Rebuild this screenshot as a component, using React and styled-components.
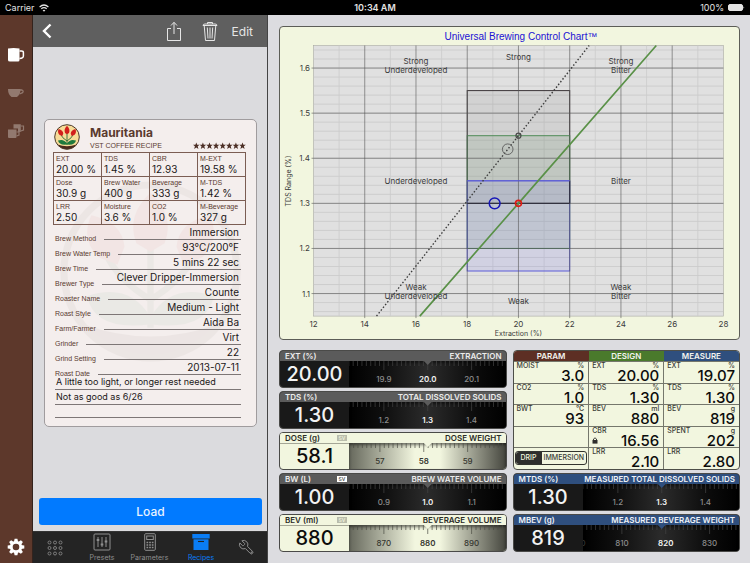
import {useState} from "react";
import styled, {createGlobalStyle} from "styled-components";

const GlobalStyle = createGlobalStyle`
* { box-sizing: border-box; }
body { margin: 0; background: #000; font-family: Inter, "Liberation Sans", sans-serif; }
button { font: inherit; color: inherit; background: none; border: 0; padding: 0; cursor: pointer; }
h1, h2, p, dl, dd, dt { margin: 0; font-size: inherit; font-weight: inherit; }
svg { display: block; }
`;

const Screen = styled.div`
min-height: 100vh;
display: flex;
flex-direction: column;
`;

const StatusBar = styled.header`
display: grid;
grid-template-columns: 1fr auto 1fr;
align-items: center;
height: 15px;
padding: 0 5px;
background: #000;
color: #e4e4e4;
font-size: 9px;
`;

const Side = styled.div`
display: flex;
align-items: center;
gap: 4px;
justify-content: ${(p) => (p.$end ? "flex-end" : "flex-start")};
`;

const Clock = styled.div`
font-size: 9px;
font-weight: 600;
`;

const Layout = styled.div`
flex: 1;
display: grid;
grid-template-columns: 33px 235px minmax(0, 1fr);
`;

const SideBar = styled.nav`
display: flex;
flex-direction: column;
align-items: center;
gap: 22px;
padding: 32px 0 7px;
background: #5d382b;
border-right: 1px solid #33231d;
`;

const SideButton = styled.button`
width: 18px;
height: 16px;
color: ${(p) => (p.$active ? "#fff" : "#92796f")};
${(p) => p.$last && "margin-top: auto; height: 18px;"}
`;

const Panel = styled.section`
display: flex;
flex-direction: column;
background: #dbdbde;
border-right: 1px solid #444;
`;

const ToolBar = styled.div`
display: flex;
align-items: center;
gap: 14px;
height: 32px;
padding: 0 14px 0 9px;
background: #5f5f5f;
color: #e6e6e6;
font-size: 12px;
`;

const ToolGroup = styled.div`
display: flex;
align-items: center;
gap: 20px;
margin-left: auto;
`;

const PanelBody = styled.div`
flex: 1;
display: flex;
flex-direction: column;
padding: 0 5px 6px 6px;
`;

const Center = styled.div`
flex: 1;
display: flex;
align-items: center;
padding: 0 5px;
`;

const LoadButton = styled.button`
height: 27px;
border-radius: 3px;
background: #017aff;
color: #e8f2ff;
font-size: 12px;
font-weight: 500;
`;

const Recipe = styled.article`
position: relative;
width: 100%;
height: 308px;
padding: 4px 10px 0 8px;
border: 1px solid #a09c9e;
border-radius: 5px;
background: #f4eeed;
color: #1b1718;
`;

const Watermark = styled.div`
position: absolute;
inset: 60px 14px auto 14px;
opacity: 0.04;
`;

const RecipeTop = styled.div`
position: relative;
display: grid;
grid-template-columns: 36px 1fr auto;
align-items: end;
height: 28px;
padding: 0 0 2px 1px;
color: #5a3a2f;
`;

const RecipeName = styled.h1`
font-size: 12px;
line-height: 16px;
font-weight: 700;
`;

const RecipeKind = styled.p`
font: 7px/9px "Liberation Sans", sans-serif;
white-space: nowrap;
`;

const Facts = styled.dl`
position: relative;
display: grid;
grid-template-columns: repeat(4, 1fr);
border: solid #7b5d53;
border-width: 1px 0 0 1px;
div {
height: 24px;
padding: 1px 0 0 2px;
border: solid #7b5d53;
border-width: 0 1px 1px 0;
white-space: nowrap;
}
dt { font: 7px/9px "Liberation Sans", sans-serif; color: #5a3a2f; }
dd { font-size: 10px; line-height: 13px; }
`;

const Fields = styled.div`
position: relative;
display: grid;
grid-template-columns: minmax(0, 1fr);
grid-auto-rows: 1fr;
height: 193px;
padding: 0 5px 0 2px;
`;

const Field = styled.div`
display: flex;
align-items: flex-end;
gap: 8px;
`;

const FieldName = styled.span`
margin-bottom: -2px;
font: 7px/6px "Liberation Sans", sans-serif;
color: #5a3a2f;
`;

const FieldValue = styled.span`
flex: 1;
height: 100%;
padding: 0 2px 0 1px;
border-bottom: 1px solid #7d7676;
font-size: ${(p) => (p.$note ? 9 : 10)}px;
line-height: 14px;
text-align: ${(p) => (p.$note ? "left" : "right")};
white-space: nowrap;
`;

const TabBar = styled.nav`
display: grid;
grid-template-columns: 44fr 50fr 45fr 58fr 33fr;
height: 32px;
padding-right: 4px;
background: #242424;
border-top: 1px solid #333;
`;

const Tab = styled.button`
display: flex;
flex-direction: column;
align-items: center;
justify-content: center;
gap: 2px;
color: ${(p) => (p.$active ? "#0a7df5" : "#8f8f8f")};
font-size: 7px;
line-height: 9px;
`;

const Main = styled.main`
display: flex;
flex-direction: column;
gap: 10px;
padding: 11px 10px 11px 11px;
background: #dcdce0;
`;

const ChartBox = styled.figure`
margin: 0;
border: 1px solid #5c5d57;
border-radius: 4px;
background: #f2f6df;
overflow: hidden;
`;

const Columns = styled.div`
display: grid;
grid-template-columns: repeat(2, minmax(0, 1fr));
gap: 6px;
`;

const Column = styled.div`
display: flex;
flex-direction: column;
gap: 3px;
`;

const dark = {
    head: "#5b5b5b", headText: "#ececec", rule: "transparent", body: "#191919", text: "#f2f2f2",
    num: "#8c8c8c", strong: "#f4f4f4", tick: "#454545",
    dial: "#000, #0f0f0f 22%, #2b2b2b 50%, #0a0a0a 82%, #000",
};

const themes = {
    dark,
    blue: {...dark, head: "#2f4f7e", headText: "#eef2f8"},
    light: {
        head: "#f2f6df", headText: "#2a2b27", rule: "#a4a696", body: "#f2f6df", text: "#0c0c0c",
        num: "#35362f", strong: "#35362f", tick: "#4b4c43",
        dial: "#66685c, #a9ac9b 20%, #f2f6df 42%, #f2f6df 58%, #8f9183 82%, #45463e",
    },
};

const GaugeBox = styled.section`
height: 38px;
border: 1px solid #4a4a48;
border-radius: 4px;
overflow: hidden;
background: ${(p) => p.$look.body};
`;

const GaugeHead = styled.div`
display: flex;
align-items: center;
height: 10px;
padding: 0 4px 0 5px;
background: ${(p) => p.$look.head};
box-shadow: 0 1px 0 ${(p) => p.$look.rule};
color: ${(p) => p.$look.headText};
font-size: 8px;
line-height: 10px;
font-weight: 600;
white-space: nowrap;
`;

const GaugeUnit = styled.span`
display: flex;
align-items: center;
justify-content: space-between;
width: 62px;
`;

const GaugeName = styled.h2`
margin-left: auto;
`;

const Badge = styled.small`
width: 10px;
height: 6px;
font-size: 5px;
line-height: 6px;
text-align: center;
background: ${(p) => (p.$on ? "#fff" : "#b9bcab")};
color: ${(p) => (p.$on ? "#555" : "#eef1dc")};
`;

const GaugeRow = styled.div`
display: grid;
grid-template-columns: 69px minmax(0, 1fr);
height: 26px;
`;

const Value = styled.output`
font-size: 20px;
line-height: 26px;
font-weight: 500;
text-align: center;
color: ${(p) => p.$look.text};
`;

const Dial = styled.div`
background: linear-gradient(to right, ${(p) => p.$look.dial});
box-shadow: inset 0 2px 3px rgba(0, 0, 0, 0.5);
overflow: hidden;
`;

const DataBox = styled.div`
height: 120px;
border: 1px solid #4d4e48;
border-radius: 4px;
background: #f2f6df;
overflow: hidden;
`;

const DataTable = styled.table`
width: 100%;
height: 100%;
table-layout: fixed;
border-collapse: collapse;
`;

const HeadCell = styled.th`
height: 10px;
padding: 0;
background: ${(p) => p.$color};
color: #f3f3ee;
font-size: 8px;
line-height: 10px;
font-weight: 600;
`;

const DataCell = styled.td`
padding: 0 4px 0 3px;
border: solid #75776c;
border-width: 1px 0 0 1px;
vertical-align: top;
&:first-child { border-left: 0; }
`;

const Caption = styled.div`
display: flex;
justify-content: space-between;
font-size: 7px;
line-height: 7px;
font-weight: 500;
color: #3a3b36;
`;

const Figure = styled.div`
display: flex;
align-items: center;
justify-content: space-between;
font-size: 15px;
line-height: 13px;
font-weight: 500;
color: #0c0c0c;
span { margin-left: auto; }
`;

const Segments = styled.fieldset`
display: grid;
grid-template-columns: 26px minmax(0, 1fr);
height: 14px;
min-width: 0;
margin: 3px -3px 0 -2px;
padding: 0;
border: 1px solid #33342f;
border-radius: 3px;
overflow: hidden;
`;

const Segment = styled.label`
font-size: 7px;
line-height: 12px;
font-weight: 500;
text-align: center;
background: ${(p) => (p.$on ? "#2e2e2c" : "transparent")};
color: ${(p) => (p.$on ? "#f2f6df" : "#3a3b36")};
input { appearance: none; position: absolute; margin: 0; }
`;

const facts = [
    ["EXT", "20.00 %"], ["TDS", "1.45 %"], ["CBR", "12.93"], ["M-EXT", "19.58 %"],
    ["Dose", "30.9 g"], ["Brew Water", "400 g"], ["Beverage", "333 g"], ["M-TDS", "1.42 %"],
    ["LRR", "2.50"], ["Moisture", "3.6 %"], ["CO2", "1.0 %"], ["M-Beverage", "327 g"],
];

const fields = [
    ["Brew Method", "Immersion"],
    ["Brew Water Temp", "93°C/200°F"],
    ["Brew Time", "5 mins 22 sec"],
    ["Brewer Type", "Clever Dripper-Immersion"],
    ["Roaster Name", "Counte"],
    ["Roast Style", "Medium - Light"],
    ["Farm/Farmer", "Aida Ba"],
    ["Grinder", "Virt"],
    ["Grind Setting", "22"],
    ["Roast Date", "2013-07-11"],
];

const notes = ["A little too light, or longer rest needed", "Not as good as 6/26", ""];

const gauges = [
    {unit: "EXT (%)", name: "EXTRACTION", value: "20.00", marks: ["19.9", "20.0", "20.1"], look: "dark"},
    {unit: "TDS (%)", name: "TOTAL DISSOLVED SOLIDS", value: "1.30", marks: ["1.2", "1.3", "1.4"], look: "dark"},
    {unit: "DOSE (g)", name: "DOSE WEIGHT", value: "58.1", marks: ["57", "58", "59"], look: "light", badge: true, shift: -4},
    {unit: "BW (L)", name: "BREW WATER VOLUME", value: "1.00", marks: ["0.9", "1.0", "1.1"], look: "dark", badge: true, on: true},
    {unit: "BEV (ml)", name: "BEVERAGE VOLUME", value: "880", marks: ["870", "880", "890"], look: "light", badge: true},
];

const measured = [
    {unit: "MTDS (%)", name: "MEASURED TOTAL DISSOLVED SOLIDS", value: "1.30", marks: ["1.2", "1.3", "1.4"], look: "blue"},
    {unit: "MBEV (g)", name: "MEASURED BEVERAGE WEIGHT", value: "819", marks: ["810", "820", "830"], look: "blue", shift: 4, before: "800"},
];

const rows = [
    [["MOIST", "%", "3.0"], ["EXT", "%", "20.00"], ["EXT", "%", "19.07"]],
    [["CO2", "%", "1.0"], ["TDS", "%", "1.30"], ["TDS", "%", "1.30"]],
    [["BWT", "°C", "93"], ["BEV", "ml", "880"], ["BEV", "g", "819"]],
    [null, ["CBR", "", "16.56", true], ["SPENT", "g", "202"]],
    ["switch", ["LRR", "", "2.10"], ["LRR", "", "2.80"]],
];

const Wifi = () => (
    <svg width="10" height="8" viewBox="0 0 10 8" fill="none" stroke="#e4e4e4" strokeWidth="1.2">
        <path d="M0.6 3 Q5 -1 9.4 3" />
        <path d="M2.3 4.8 Q5 2.4 7.7 4.8" />
        <path d="M5 7.7 L3.6 6.3 Q5 5.2 6.4 6.3 Z" fill="#e4e4e4" stroke="none" />
    </svg>
);

const Battery = () => (
    <svg width="17" height="7" viewBox="0 0 17 7">
        <rect x="0.5" y="0.5" width="14" height="6" rx="1.5" fill="#e4e4e4" stroke="#e4e4e4" />
        <path d="M15.5 2.2 Q17 3.5 15.5 4.8 Z" fill="#e4e4e4" />
    </svg>
);

const Mug = () => (
    <svg width="18" height="16" viewBox="0 0 18 16">
        <path d="M1 1.5 Q6.5 0.5 12.5 1.5 V13 Q12.5 14.5 11 14.5 H3 Q1 14.5 1 13 Z" fill="currentColor" />
        <path d="M12.5 4 H14.5 Q16.4 4 16.4 5.5 V9 Q16.4 11.2 12.5 11.5" fill="none" stroke="currentColor" strokeWidth="1.5" />
    </svg>
);

const Cup = () => (
    <svg width="18" height="16" viewBox="0 0 18 16">
        <path d="M1 4 H13.5 Q13.5 9.5 10 12 H4.5 Q1 9.5 1 4 Z" fill="currentColor" />
        <path d="M13 5 H15 Q17 6 15.5 7.7 L12.5 9" fill="none" stroke="currentColor" strokeWidth="1.3" />
    </svg>
);

const Mugs = () => (
    <svg width="18" height="16" viewBox="0 0 18 16">
        <path d="M6.5 1.3 H13.8 V9 H11 V5.5 H6.5 Z M1 6.5 H9.5 V14 Q9.5 15 8.5 15 H2 Q1 15 1 14 Z" fill="currentColor" />
        <path d="M13.8 3 H16.5 V7 L13.8 8 M9.5 9 H12 V12 L9.5 13" fill="none" stroke="currentColor" strokeWidth="1.2" />
    </svg>
);

const Gear = () => (
    <svg width="18" height="18" viewBox="0 0 18 18">
        {[0, 45, 90, 135, 180, 225, 270, 315].map((a) => (
            <path key={a} d="M6.9 4 L7.6 0.7 H10.4 L11.1 4 Z" fill="currentColor" transform={`rotate(${a} 9 9)`} />
        ))}
        <circle cx="9" cy="9" r="4.7" fill="none" stroke="currentColor" strokeWidth="2.8" />
    </svg>
);

const Back = () => (
    <svg width="10" height="16" viewBox="0 0 10 16" fill="none" stroke="#fff" strokeWidth="2.4">
        <path d="M8.5 1.5 L2 8 L8.5 14.5" />
    </svg>
);

const Share = () => (
    <svg width="16" height="21" viewBox="0 0 16 21" fill="none" stroke="currentColor" strokeWidth="1">
        <path d="M5 7.5 H1.5 V19.5 H14.5 V7.5 H11 M8 13 V1.5 M5 4.5 L8 1.3 L11 4.5" />
    </svg>
);

const Trash = () => (
    <svg width="16" height="21" viewBox="0 0 16 21" fill="none" stroke="currentColor" strokeWidth="1">
        <path d="M1 4.5 Q1 3 3 3 H13 Q15 3 15 4.5 Z M5.5 3 V1.5 H10.5 V3 M2.2 4.5 L3.5 19.5 H12.5 L13.8 4.5 M5.3 6.5 L6 17.5 M8 6.5 V17.5 M10.7 6.5 L10 17.5" />
    </svg>
);

const Emblem = ({size, disc = "#f7dc98"}) => (
    <svg width={size} height={size} viewBox="0 0 26 26">
        <circle cx="13" cy="13" r="12.3" fill={disc} />
        <path d="M3.5 20.5 Q13 24 22.5 20.5 Q19 25.3 13 25.3 Q7 25.3 3.5 20.5 Z" fill="#4c2a1c" />
        <path d="M13 8 V21 M6.5 10 Q8 14 13 17 M19.5 10 Q18 14 13 17" fill="none" stroke="#2d6a35" strokeWidth="0.9" />
        <path d="M13 19.5 Q10 14.5 4 16.5 Q5 21.5 13 20.5 Z M13 19.5 Q16 14.5 22 16.5 Q21 21.5 13 20.5 Z" fill="#1f7a3d" />
        <path d="M13 1.8 Q16.5 5 15 9 L13 10.2 L11 9 Q9.5 5 13 1.8 Z" fill="#d21f1c" />
        <path d="M4.6 5 Q9 6 9.3 9.5 L8.3 12 L5.7 11 Q3 8.5 4.6 5 Z M21.4 5 Q17 6 16.7 9.5 L17.7 12 L20.3 11 Q23 8.5 21.4 5 Z" fill="#d21f1c" />
        <circle cx="13" cy="13" r="12.3" fill="none" stroke="#4c3a2c" strokeWidth="1" />
    </svg>
);

const Stars = () => (
    <svg width="53" height="8" viewBox="0 0 53 8" fill="#4c2f26" role="img" aria-label="8 stars">
        {[0, 1, 2, 3, 4, 5, 6, 7].map((i) => (
            <path key={i} transform={`translate(${i * 6.6} 0)`} d="M3.3 0.4 L4.2 2.7 H6.6 L4.7 4.3 L5.4 6.9 L3.3 5.5 L1.2 6.9 L1.9 4.3 L0 2.7 H2.4 Z" />
        ))}
    </svg>
);

const Keypad = () => (
    <svg width="16" height="16" viewBox="0 0 16 16" fill="none" stroke="currentColor" strokeWidth="0.8">
        {[2.5, 8, 13.5].map((y) => [2.5, 8, 13.5].map((x) => <circle key={`${x}-${y}`} cx={x} cy={y} r="1.5" />))}
    </svg>
);

const Sliders = () => (
    <svg width="18" height="18" viewBox="0 0 18 18" fill="none" stroke="currentColor">
        <rect x="1" y="1" width="16" height="16" rx="1" />
        <path d="M5 4 V14 M9 4 V14 M13 4 V14" />
        <path d="M5 6 V8 M9 10.5 V12.5 M13 7.5 V9.5" strokeWidth="2.6" />
    </svg>
);

const Meter = () => (
    <svg width="12" height="18" viewBox="0 0 12 18" fill="none" stroke="currentColor">
        <rect x="0.7" y="0.7" width="10.6" height="16.6" rx="1" />
        <rect x="2.7" y="3" width="6.6" height="3.5" />
        <path d="M2.5 9.5 H9.5 M2.5 12 H9.5 M2.5 14.5 H9.5" strokeWidth="1.3" strokeDasharray="1.7 0.95" />
    </svg>
);

const Box = () => (
    <svg width="18" height="18" viewBox="0 0 18 18" fill="currentColor">
        <path d="M0.3 1 H17.7 V5.5 H0.3 Z" />
        <path d="M1.5 6.3 H16.5 V17 H1.5 Z" />
        <path d="M6 8.5 H12" stroke="#242424" strokeWidth="1.1" />
    </svg>
);

const Wrench = () => (
    <svg width="17" height="17" viewBox="0 0 24 24" fill="none" stroke="currentColor" strokeWidth="1.4">
        <path transform="translate(24 0) scale(-1 1)" d="M14.7 6.3a1 1 0 0 0 0 1.4l1.6 1.6a1 1 0 0 0 1.4 0l3.77-3.77a6 6 0 0 1-7.94 7.94l-6.91 6.91a2.12 2.12 0 0 1-3-3l6.91-6.91a6 6 0 0 1 7.94-7.94l-3.76 3.76z" />
        <circle cx="19" cy="19" r="0.7" />
    </svg>
);

const Lock = () => (
    <svg width="6" height="7" viewBox="0 0 6 7">
        <rect x="0.5" y="3" width="5" height="3.6" fill="#2e2e2c" />
        <path d="M1.5 3 V2 Q3 -0.3 4.5 2 V3" fill="none" stroke="#2e2e2c" strokeWidth="0.9" />
    </svg>
);

// chart scale: extraction 12-28 %, TDS 1.05-1.65 %
const px = (v) => 33.5 + (v - 12) * 25.62;
const py = (v) => 18.5 + (1.65 - v) * 451;

const zones = [
    {from: 1.55, to: 1.3, fill: "rgba(80,80,80,0.09)", line: "#3c3639"},
    {from: 1.45, to: 1.2, fill: "rgba(70,120,70,0.12)", line: "#4f8a57"},
    {from: 1.35, to: 1.15, fill: "rgba(110,110,240,0.13)", line: "#5a5ad8"},
];

const areas = [
    [16, 37, "Strong"], [16, 46, "Underdeveloped"], [20, 33, "Strong"], [24, 37, "Strong"], [24, 46, "Bitter"],
    [16, 157, "Underdeveloped"], [24, 157, "Bitter"],
    [16, 263, "Weak"], [16, 272, "Underdeveloped"], [20, 277, "Weak"], [24, 263, "Weak"], [24, 272, "Bitter"],
];

const Chart = () => {
    const minor = [];
    for (let i = 0; i < 30; i++) minor.push(1.06 + i * 0.02);
    return (
        <svg width="100%" viewBox="0 0 459 312" fontFamily="Inter, sans-serif" fontSize="8" fill="#3b3b3b">
            <rect x={px(12)} y={py(1.65)} width={px(28) - px(12)} height={py(1.05) - py(1.65)} fill="#e0e0e0" stroke="#a9a9a4" strokeWidth="0.6" />
            {minor.map((v) => <path key={v} d={`M${px(12)} ${py(v)} H${px(28)}`} stroke="#c6c6c6" strokeWidth="0.7" />)}
            {[13, 15, 17, 19, 21, 23, 25, 27].map((v) => <path key={v} d={`M${px(v)} ${py(1.65)} V${py(1.05)}`} stroke="#cbcbcb" strokeWidth="0.8" />)}
            {zones.map((z) => (
                <rect key={z.from} x={px(18)} y={py(z.from)} width={px(22) - px(18)} height={py(z.to) - py(z.from)} fill={z.fill} stroke={z.line} />
            ))}
            {[14, 16, 18, 20, 22, 24, 26].map((v) => <path key={v} d={`M${px(v)} ${py(1.65)} V${py(1.05) + 2}`} stroke="#555" strokeOpacity="0.75" strokeWidth="0.8" />)}
            {[1.1, 1.2, 1.3, 1.4, 1.5, 1.6].map((v) => <path key={v} d={`M${px(12) - 2} ${py(v)} H${px(28)}`} stroke="#555" strokeOpacity="0.75" strokeWidth="0.8" />)}
            <path d={`M${px(18)} ${py(1.3)} H${px(22)} V${py(1.35)}`} stroke="#2c2c3a" fill="none" />
            <path d={`M${px(18)} ${py(1.35)} H${px(22)}`} stroke="#5a5ad8" />
            <path d={`M${px(14.46)} ${py(1.05)} L${px(20)} ${py(1.45)} L${px(22.76)} ${py(1.65)}`} fill="none" stroke="#3d3d3d" strokeWidth="1.4" strokeDasharray="1.5 2" />
            <path d={`M${px(16.15)} ${py(1.05)} L${px(20)} ${py(1.3)} L${px(25.38)} ${py(1.65)}`} fill="none" stroke="#5a9148" strokeWidth="1.7" />
            <g fill="none">
                <circle cx={px(19.58)} cy={py(1.42)} r="5.3" stroke="#5c5c5c" strokeWidth="0.9" />
                <circle cx={px(20)} cy={py(1.45)} r="2.5" stroke="#4a4a4a" strokeWidth="1.2" />
                <circle cx={px(19.07)} cy={py(1.3)} r="5.4" stroke="#1616b8" strokeWidth="1.5" />
                <circle cx={px(20)} cy={py(1.3)} r="3" stroke="#e01c14" strokeWidth="1.6" />
            </g>
            <g textAnchor="middle">
                <text x="241" y="13" fontSize="10" fontFamily="Liberation Sans, sans-serif" fill="#1b12d4">Universal Brewing Control Chart™</text>
                {areas.map(([v, y, t]) => <text key={`${v}-${y}`} x={px(v)} y={y}>{t}</text>)}
                {[12, 14, 16, 18, 20, 22, 24, 26, 28].map((v) => <text key={v} x={px(v)} y="300">{v}</text>)}
                <text x={px(20)} y="309" fontSize="7">Extraction (%)</text>
                <text transform="translate(11 154) rotate(-90)" fontSize="7">TDS Range (%)</text>
            </g>
            <g textAnchor="end">
                {["1.1", "1.2", "1.3", "1.4", "1.5", "1.6"].map((v) => <text key={v} x="30" y={py(Number(v)) + 3}>{v}</text>)}
            </g>
        </svg>
    );
};

const Gauge = ({unit, name, value, marks, look, badge, on, shift = 0, before}) => {
    const t = themes[look];
    const mid = 79 + shift;
    const ticks = [];
    for (let i = -22; i <= 22; i++) ticks.push(i);
    return (
        <GaugeBox $look={t}>
            <GaugeHead $look={t}>
                <GaugeUnit>{unit}{badge && <Badge $on={on}>SV</Badge>}</GaugeUnit>
                <GaugeName>{name}</GaugeName>
            </GaugeHead>
            <GaugeRow>
                <Value $look={t}>{value}</Value>
                <Dial $look={t}>
                    <svg width="100%" height="26" viewBox="0 0 157 26" fontFamily="Inter, sans-serif" fontSize="8" fontWeight="500" textAnchor="middle">
                        {ticks.map((i) => (
                            <path key={i} d={`M${mid + i * 4.4} 0 V${i % 10 === 0 ? 9 : 5}`} stroke={t.tick} strokeWidth="0.7" />
                        ))}
                        <path d="M75 0 H83 L79 4 Z" fill={t.head} />
                        {before && <text x={mid - 88} y="21" fill="#333">{before}</text>}
                        {marks.map((m, i) => (
                            <text key={m} x={mid + (i - 1) * 44} y="21" fill={i === 1 ? t.strong : t.num} fontWeight={i === 1 ? 600 : 500}>{m}</text>
                        ))}
                    </svg>
                </Dial>
            </GaugeRow>
        </GaugeBox>
    );
};

const BrewSwitch = () => {
    const [mode, setMode] = useState("DRIP");
    return (
        <Segments aria-label="Brew mode">
            {["DRIP", "IMMERSION"].map((m) => (
                <Segment key={m} $on={mode === m}>
                    <input type="radio" name="mode" checked={mode === m} onChange={() => setMode(m)} />{m}
                </Segment>
            ))}
        </Segments>
    );
};

const Cell = ({data}) => {
    if (!data) return <DataCell />;
    if (data === "switch") return <DataCell><BrewSwitch /></DataCell>;
    const [label, unit, value, locked] = data;
    return (
        <DataCell>
            <Caption><span>{label}</span><span>{unit}</span></Caption>
            <Figure>{locked && <Lock />}<span>{value}</span></Figure>
        </DataCell>
    );
};

const RecipeCard = () => (
    <Recipe>
        <Watermark><Emblem size="100%" disc="none" /></Watermark>
        <RecipeTop>
            <Emblem size="26" />
            <div>
                <RecipeName>Mauritania</RecipeName>
                <RecipeKind>VST COFFEE RECIPE</RecipeKind>
            </div>
            <Stars />
        </RecipeTop>
        <Facts>
            {facts.map(([k, v]) => <div key={k}><dt>{k}</dt><dd>{v}</dd></div>)}
        </Facts>
        <Fields>
            {fields.map(([k, v]) => (
                <Field key={k}><FieldName>{k}</FieldName><FieldValue>{v}</FieldValue></Field>
            ))}
            {notes.map((n) => <Field key={n}><FieldValue $note>{n}</FieldValue></Field>)}
        </Fields>
    </Recipe>
);

export default function App() {
    return (
        <Screen>
            <GlobalStyle />
            <StatusBar>
                <Side>Carrier <Wifi /></Side>
                <Clock>10:34 AM</Clock>
                <Side $end>100% <Battery /></Side>
            </StatusBar>
            <Layout>
                <SideBar>
                    <SideButton $active aria-label="Coffee"><Mug /></SideButton>
                    <SideButton aria-label="Espresso"><Cup /></SideButton>
                    <SideButton aria-label="Compare"><Mugs /></SideButton>
                    <SideButton $active $last aria-label="Settings"><Gear /></SideButton>
                </SideBar>
                <Panel>
                    <ToolBar>
                        <button aria-label="Back"><Back /></button>
                        <ToolGroup>
                            <button aria-label="Share"><Share /></button>
                            <button aria-label="Delete"><Trash /></button>
                        </ToolGroup>
                        <button>Edit</button>
                    </ToolBar>
                    <PanelBody>
                        <Center><RecipeCard /></Center>
                        <LoadButton>Load</LoadButton>
                    </PanelBody>
                    <TabBar>
                        <Tab aria-label="Keypad"><Keypad /></Tab>
                        <Tab><Sliders />Presets</Tab>
                        <Tab><Meter />Parameters</Tab>
                        <Tab $active><Box />Recipes</Tab>
                        <Tab aria-label="Tools"><Wrench /></Tab>
                    </TabBar>
                </Panel>
                <Main>
                    <ChartBox><Chart /></ChartBox>
                    <Columns>
                        <Column>{gauges.map((g) => <Gauge key={g.unit} {...g} />)}</Column>
                        <Column>
                            <DataBox>
                                <DataTable>
                                    <thead>
                                        <tr>
                                            <HeadCell $color="#5d2f24">PARAM</HeadCell>
                                            <HeadCell $color="#4a7a2c">DESIGN</HeadCell>
                                            <HeadCell $color="#2f4f7e">MEASURE</HeadCell>
                                        </tr>
                                    </thead>
                                    <tbody>
                                        {rows.map((r, i) => <tr key={i}>{r.map((c, j) => <Cell key={j} data={c} />)}</tr>)}
                                    </tbody>
                                </DataTable>
                            </DataBox>
                            {measured.map((g) => <Gauge key={g.unit} {...g} />)}
                        </Column>
                    </Columns>
                </Main>
            </Layout>
        </Screen>
    );
}
